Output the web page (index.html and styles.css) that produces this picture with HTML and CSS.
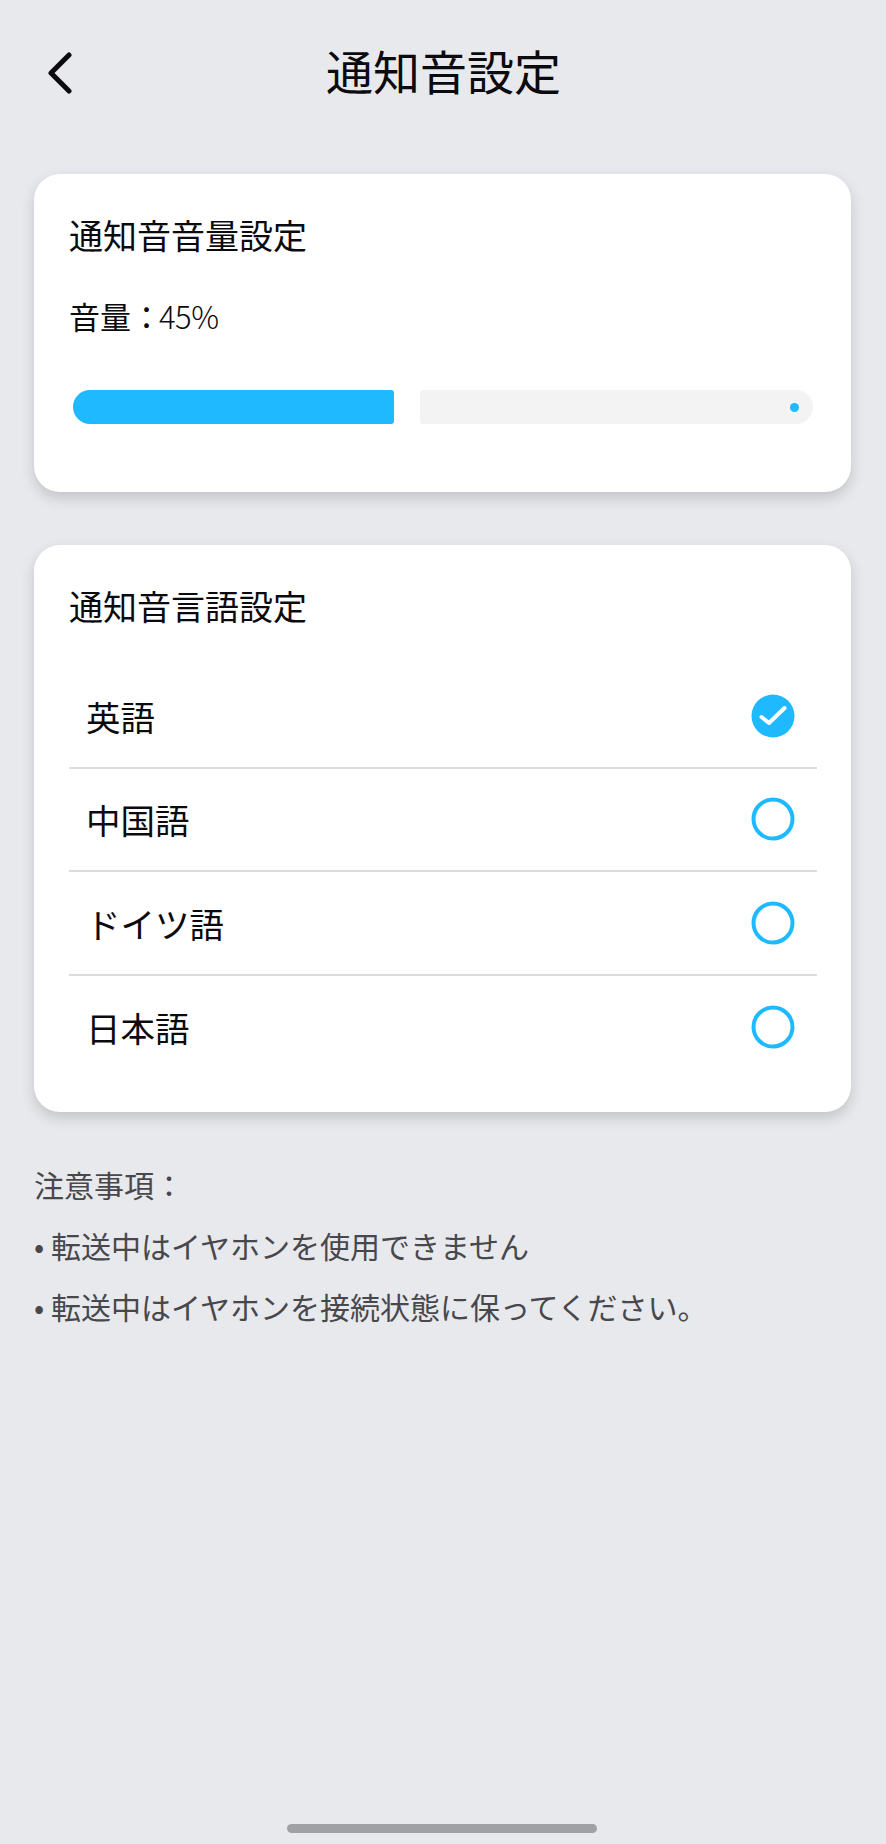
FILE: index.html
```html
<!DOCTYPE html>
<html lang="ja">
<head>
	<meta charset="UTF-8">
	<meta name="viewport" content="width=device-width, initial-scale=1.0">
	<title>通知音設定</title>
	<link rel="stylesheet" href="styles.css">
</head>
<body>
	<div class="page">
		<header class="header">
			<svg class="back" width="26" height="42" viewBox="0 0 26 42" fill="none">
				<path d="M23 3 L5 21 L23 39" stroke="#0b0b0f" stroke-width="5" stroke-linecap="round" stroke-linejoin="round"/>
			</svg>
			<h1 class="title">通知音設定</h1>
		</header>

		<section class="card card-volume">
			<h2 class="card-title">通知音音量設定</h2>
			<p class="volume-label">音量：<span class="volume-value">45%</span></p>
			<div class="slider">
				<div class="slider-active"></div>
				<div class="slider-rest"><span class="slider-dot"></span></div>
			</div>
		</section>

		<section class="card card-lang">
			<h2 class="card-title">通知音言語設定</h2>
			<ul class="lang-list">
				<li class="lang-item">
					<span>英語</span>
					<svg class="radio" width="44" height="44" viewBox="0 0 44 44">
						<circle cx="22" cy="22" r="21.5" fill="#1fb9ff"/>
						<path d="M10.5 23 L18 29 L33.5 14" fill="none" stroke="#fff" stroke-width="4" stroke-linecap="round" stroke-linejoin="round"/>
					</svg>
				</li>
				<li class="lang-item">
					<span>中国語</span>
					<svg class="radio" width="44" height="44" viewBox="0 0 44 44">
						<circle cx="22" cy="22" r="19.5" fill="none" stroke="#1fb9ff" stroke-width="4"/>
					</svg>
				</li>
				<li class="lang-item">
					<span>ドイツ語</span>
					<svg class="radio" width="44" height="44" viewBox="0 0 44 44">
						<circle cx="22" cy="22" r="19.5" fill="none" stroke="#1fb9ff" stroke-width="4"/>
					</svg>
				</li>
				<li class="lang-item">
					<span>日本語</span>
					<svg class="radio" width="44" height="44" viewBox="0 0 44 44">
						<circle cx="22" cy="22" r="19.5" fill="none" stroke="#1fb9ff" stroke-width="4"/>
					</svg>
				</li>
			</ul>
		</section>

		<div class="notes">
			<p>注意事項：</p>
			<p>• 転送中はイヤホンを使用できません</p>
			<p>• 転送中はイヤホンを接続状態に保ってください。</p>
		</div>

		<div class="home-bar"></div>
	</div>
</body>
</html>
```

FILE: styles.css
```css
* {
	box-sizing: border-box;
}
html, body {
	margin: 0;
	padding: 0;
}
body {
	background: #e8e9ed;
	font-family: "Noto Sans CJK JP", "Noto Sans", sans-serif;
	color: #0b0b0f;
}
.page {
	width: 886px;
	height: 1844px;
	padding: 0 35px 0 34px;
	display: flex;
	flex-direction: column;
}

/* header */
.header {
	height: 174px;
	padding: 52px 0 0 12px;
	display: flex;
	align-items: flex-start;
}
.back {
	flex: none;
}
.title {
	margin: -15px 0 0 254px;
	font-size: 47px;
	line-height: 66px;
	font-weight: 400;
}

/* cards */
.card {
	background: #fff;
	border-radius: 26px;
	box-shadow: 0 6px 14px rgba(0, 0, 0, .16);
	padding: 36px 34px 0 35px;
}
.card-volume {
	height: 318px;
}
.card-lang {
	height: 567px;
	margin-top: 53px;
}
.card-title {
	margin: 0;
	font-size: 34px;
	line-height: 50px;
	font-weight: 400;
}
.volume-label {
	margin: 34px 0 0;
	font-size: 31px;
	line-height: 44px;
}
.volume-value {
	margin-left: -3px;
	font-weight: 300;
	letter-spacing: -.5px;
}

/* volume slider */
.slider {
	display: flex;
	gap: 26px;
	height: 34px;
	margin: 52px 4px 0 4px;
}
.slider-active {
	width: 321px;
	background: #1fb9ff;
	border-radius: 17px 3px 3px 17px;
}
.slider-rest {
	flex: 1;
	background: #f3f3f4;
	border-radius: 3px 17px 17px 3px;
	display: flex;
	align-items: center;
	justify-content: flex-end;
	padding-right: 14px;
}
.slider-dot {
	width: 9px;
	height: 9px;
	border-radius: 50%;
	background: #1fb9ff;
}

/* language list */
.lang-list {
	list-style: none;
	margin: 34px 0 0;
	padding: 0;
}
.lang-item {
	height: 103.5px;
	padding: 0 22px 0 17px;
	display: flex;
	align-items: center;
	justify-content: space-between;
	font-size: 34.5px;
	border-bottom: 2px solid #dcdcde;
}
.lang-item:last-child {
	border-bottom: 0;
}

/* notes */
.notes {
	margin: 42px 0 0;
	font-size: 30px;
	line-height: 61px;
	color: #47474c;
}
.notes p {
	margin: 0;
}

.home-bar {
	width: 310px;
	height: 9px;
	margin: auto 0 11px 253px;
	border-radius: 5px;
	background: #a0a1a5;
}
```
